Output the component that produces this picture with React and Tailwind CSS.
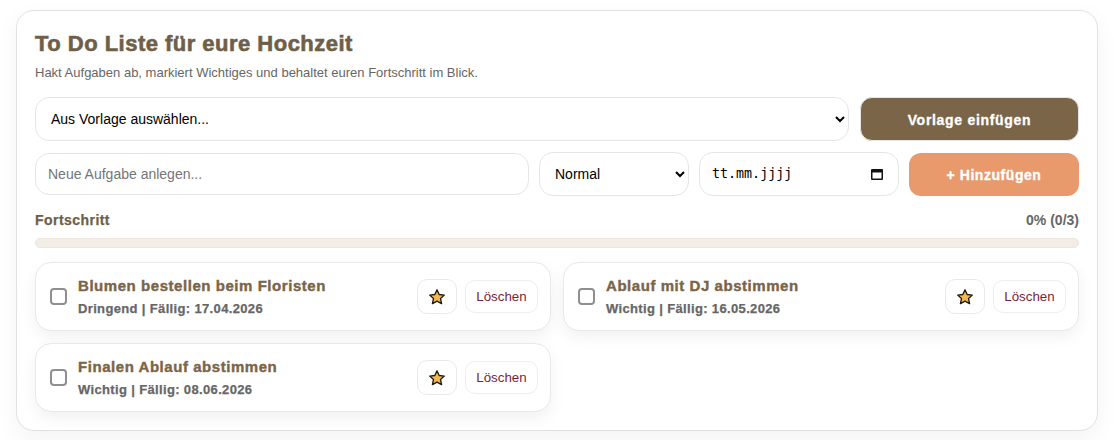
const tasks = [
  { title: "Blumen bestellen beim Floristen", meta: "Dringend | Fällig: 17.04.2026" },
  { title: "Ablauf mit DJ abstimmen", meta: "Wichtig | Fällig: 16.05.2026" },
  { title: "Finalen Ablauf abstimmen", meta: "Wichtig | Fällig: 08.06.2026" },
];

function Task({ title, meta }) {
  return (
    <div className="flex h-[69px] items-center gap-[11px] rounded-[16px] border border-[#e9e9e9] bg-white pl-[14px] pr-[12px] shadow-[0_6px_16px_rgba(0,0,0,0.06)]">
      <input type="checkbox" className="m-0 h-[17px] w-[17px] shrink-0 appearance-none rounded-[4px] border-2 border-[#8f8f8f] bg-white" />
      <div className="min-w-0 flex-1">
        <div className="text-[15px] leading-[18px] font-bold tracking-[0.55px] text-[#7a6548] [-webkit-text-stroke:0.4px_#7a6548]">{title}</div>
        <div className="mt-[6px] text-[13px] leading-[16px] font-bold tracking-[0.35px] text-[#666666] [-webkit-text-stroke:0.25px_#666666]">{meta}</div>
      </div>
      <div className="flex items-center gap-[8px]">
        <button className="flex h-[35px] w-[40px] items-center justify-center rounded-[10px] border border-[#e9e9e9] bg-white pt-[1px]">
          <svg width="18" height="18" viewBox="0 0 24 24">
            <path d="M12 2.5l2.9 6.2 6.8.8-5 4.6 1.4 6.7-6.1-3.4-6.1 3.4 1.4-6.7-5-4.6 6.8-.8z" fill="#f2b84b" stroke="#1f1a10" strokeWidth="1.8" strokeLinejoin="round" />
          </svg>
        </button>
        <button className="h-[33px] w-[73px] rounded-[10px] border border-[#eeeeee] bg-white text-[13.33px] text-[#7b1e3a]">Löschen</button>
      </div>
    </div>
  );
}

export default function App() {
  return (
    <div className="h-[440px] bg-white px-[16px] pt-[10px] font-['Liberation_Sans',Arial,sans-serif]">
      <div className="h-[421px] rounded-[18px] border border-[#e2e2e2] bg-white px-[18px] pt-[20px] shadow-[0_8px_24px_rgba(0,0,0,0.05)]">
        <h1 className="text-[22px] leading-[26px] font-bold tracking-[0.48px] text-[#6f5f48] [-webkit-text-stroke:0.6px_#6f5f48]">To Do Liste für eure Hochzeit</h1>
        <p className="mt-[8px] text-[13px] leading-[16px] text-[#666666]">Hakt Aufgaben ab, markiert Wichtiges und behaltet euren Fortschritt im Blick.</p>
        <div className="mt-[16px] flex gap-[11px]">
          <select className="h-[44px] min-w-0 flex-1 rounded-[14px] border border-[#e6e6e6] bg-white pl-[11px] text-[14px] text-black">
            <option>Aus Vorlage auswählen...</option>
          </select>
          <button className="h-[44px] w-[219px] rounded-[12px] border border-[#e6e6e6] bg-[#7a6548] pt-[2px] text-[14px] font-bold tracking-[0.7px] text-white [-webkit-text-stroke:0.3px_#ffffff]">Vorlage einfügen</button>
        </div>
        <div className="mt-[11px] flex items-center gap-[10px]">
          <input placeholder="Neue Aufgabe anlegen..." className="h-[42px] min-w-0 flex-1 rounded-[14px] border border-[#e6e6e6] bg-white px-[12px] text-[14px] text-black placeholder:text-[#757575]" />
          <select defaultValue="Normal" className="h-[44px] w-[150px] rounded-[14px] border border-[#e6e6e6] bg-white pl-[11px] text-[14px] text-black">
            <option>Normal</option>
          </select>
          <label className="flex h-[44px] w-[200px] items-center rounded-[14px] border border-[#e6e6e6] bg-white pl-[12px] pr-[14px]">
            <input readOnly placeholder="tt.mm.jjjj" className="min-w-0 flex-1 bg-white font-['DejaVu_Sans_Mono',monospace] text-[13.33px] placeholder:text-black" />
            <svg width="14" height="14" viewBox="0 0 14 14" className="shrink-0">
              <rect x="1" y="2" width="12" height="11" rx="1" fill="#111111" />
              <rect x="2.5" y="5.5" width="9" height="6" fill="#ffffff" />
            </svg>
          </label>
          <button className="h-[43px] w-[170px] rounded-[12px] bg-[#e89a6c] pt-[2px] text-[14px] font-bold tracking-[0.55px] text-white [-webkit-text-stroke:0.3px_#ffffff]">+ Hinzufügen</button>
        </div>
        <div className="mt-[16px] flex items-center justify-between text-[14px] leading-[16px] font-bold text-[#666666]">
          <span className="tracking-[0.45px] text-[#6f5f48] [-webkit-text-stroke:0.25px_#6f5f48]">Fortschritt</span>
          <span>0% (0/3)</span>
        </div>
        <div className="mt-[10px] h-[10px] rounded-full border border-[#ebe6df] bg-[#f2ede6]"></div>
        <div className="mt-[14px] grid grid-cols-2 gap-x-[12px] gap-y-[12px]">
          {tasks.map((t) => <Task key={t.title} {...t} />)}
        </div>
      </div>
    </div>
  );
}
